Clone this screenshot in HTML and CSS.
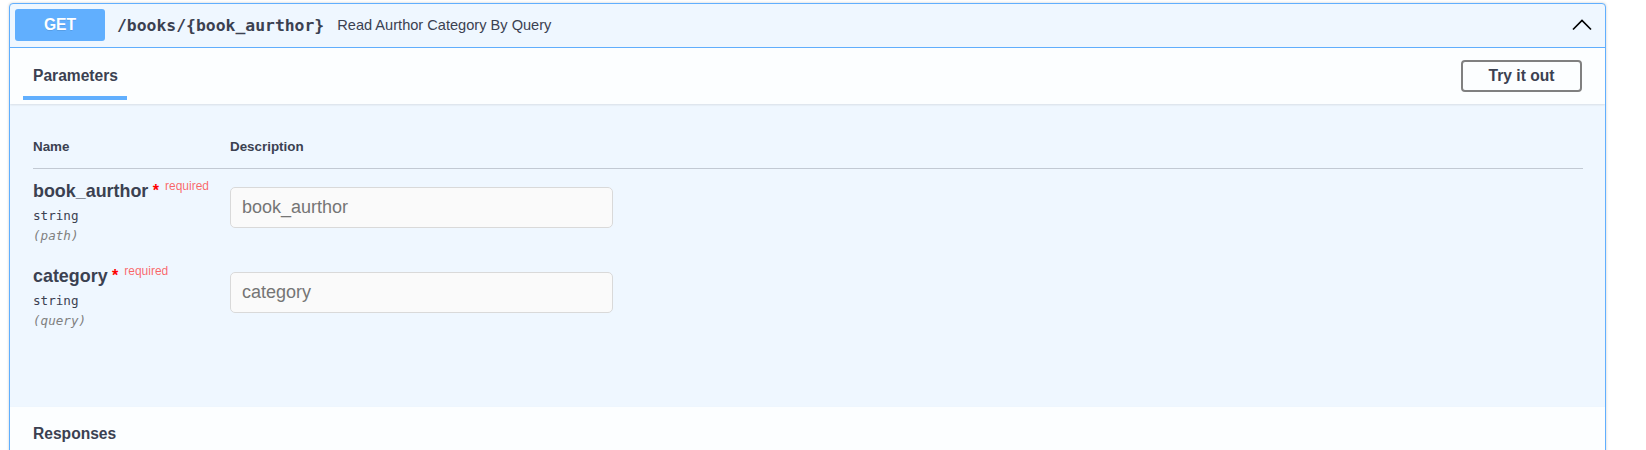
FILE: index.html
```html
<!DOCTYPE html>
<html lang="en">
<head>
<meta charset="utf-8">
<title>GET /books/{book_aurthor}</title>
<link rel="stylesheet" href="styles.css">
</head>
<body>
<div class="page">
  <div class="opblock">
    <div class="summary">
      <span class="method">GET</span>
      <span class="path">/books/{book_aurthor}</span>
      <span class="desc">Read Aurthor Category By Query</span>
      <svg class="chevron" width="20" height="20" viewBox="0 0 20 20" aria-hidden="true">
        <path d="M1 14.5 L10 5.5 L19 14.5" fill="none" stroke="#000" stroke-width="1.7"/>
      </svg>
    </div>
    <div class="section-header">
      <div class="tab">Parameters</div>
      <button class="try-btn" type="button">Try it out</button>
    </div>
    <div class="params-body">
      <div class="ptable">
        <div class="prow phead">
          <div class="col-name">Name</div>
          <div class="col-desc">Description</div>
        </div>
        <div class="prow">
          <div class="col-name">
            <div class="pname">book_aurthor<span class="star">&nbsp;*</span><span class="req">required</span></div>
            <div class="ptype">string</div>
            <div class="pin">(path)</div>
          </div>
          <div class="col-desc">
            <input class="pinput" type="text" placeholder="book_aurthor">
          </div>
        </div>
        <div class="prow">
          <div class="col-name">
            <div class="pname">category<span class="star">&nbsp;*</span><span class="req">required</span></div>
            <div class="ptype">string</div>
            <div class="pin">(query)</div>
          </div>
          <div class="col-desc">
            <input class="pinput" type="text" placeholder="category">
          </div>
        </div>
      </div>
    </div>
    <div class="responses-header">Responses</div>
  </div>
</div>
</body>
</html>
```
FILE: styles.css
```css
* { box-sizing: border-box; }
html, body { margin: 0; padding: 0; background: #fff; }
body {
  font-family: "Liberation Sans", Arial, sans-serif;
  color: #3b4151;
  overflow: hidden;
}
.page {
  padding: 3px 40px 0 9px;
}
.opblock {
  border: 1px solid #61affe;
  border-radius: 4px;
  background: #eff7ff;
  box-shadow: 0 0 3px rgba(0, 0, 0, 0.19);
  overflow: hidden;
}
.summary {
  display: flex;
  align-items: center;
  padding: 5px 13px 6px 5px;
  border-bottom: 1px solid #61affe;
  height: 44px;
}
.method {
  width: 90px;
  height: 32px;
  background: #61affe;
  border-radius: 3px;
  color: #fff;
  font-weight: 700;
  font-size: 15.6px;
  line-height: 32px;
  text-align: center;
  text-shadow: 0 1px 0 rgba(0, 0, 0, 0.1);
}
.path {
  margin-left: 12px;
  font-family: "DejaVu Sans Mono", "Liberation Mono", monospace;
  font-weight: 700;
  font-size: 16.4px;
  color: #3b4151;
}
.desc {
  margin-left: 13px;
  font-size: 14.6px;
  color: #3b4151;
}
.chevron {
  margin-left: auto;
  display: block;
}
.section-header {
  display: flex;
  align-items: center;
  height: 56px;
  padding-right: 23px;
  background: rgba(255, 255, 255, 0.8);
  box-shadow: 0 1px 2px rgba(0, 0, 0, 0.1);
  position: relative;
}
.tab {
  align-self: flex-start;
  margin-left: 13px;
  padding: 19px 9px 11px 10px;
  border-bottom: 4px solid #61affe;
  font-size: 15.6px;
  font-weight: 700;
  line-height: 18px;
}
.try-btn {
  margin-left: auto;
  width: 121px;
  height: 32px;
  border: 2px solid #808080;
  border-radius: 4px;
  background: transparent;
  font-family: "Liberation Sans", Arial, sans-serif;
  font-size: 15.6px;
  font-weight: 700;
  color: #3b4151;
  padding: 0;
}
.params-body {
  padding: 22px 22px 68px 23px;
}
.prow {
  display: flex;
}
.phead {
  border-bottom: 1px solid rgba(59, 65, 81, 0.25);
  padding: 13px 0 13px;
  font-size: 13.4px;
  font-weight: 700;
  line-height: 16px;
}
.col-name {
  width: 197px;
  flex: none;
}
.prow:not(.phead) {
  padding: 12px 0 8px;
  height: 85px;
}
.pname {
  font-size: 17.9px;
  font-weight: 700;
  line-height: 20px;
  white-space: nowrap;
}
.star {
  color: #ff0000;
  font-size: 16px;
  font-weight: 700;
  position: relative;
  top: -1px;
}
.req {
  color: rgba(255, 0, 0, 0.6);
  font-size: 12px;
  font-weight: 400;
  padding-left: 6px;
  position: relative;
  top: -7px;
}
.ptype {
  margin-top: 3px;
  font-family: "DejaVu Sans Mono", "Liberation Mono", monospace;
  font-size: 12.6px;
  line-height: 20px;
  color: #3b4151;
}
.pin {
  font-family: "DejaVu Sans Mono", "Liberation Mono", monospace;
  font-size: 12.6px;
  font-style: italic;
  line-height: 20px;
  color: #808080;
}
.pinput {
  display: block;
  margin-top: 6px;
  width: 383px;
  height: 41px;
  border: 1px solid #d9d9d9;
  border-radius: 5px;
  background: #fafafa;
  padding: 0 11px;
  font-family: "Liberation Sans", Arial, sans-serif;
  font-size: 18px;
  color: #3b4151;
  outline: none;
}
.pinput::placeholder {
  color: #757575;
}
.responses-header {
  background: rgba(255, 255, 255, 0.8);
  box-shadow: 0 1px 2px rgba(0, 0, 0, 0.1);
  padding: 18px 23px 20px;
  font-size: 15.6px;
  font-weight: 700;
  line-height: 18px;
}
```
